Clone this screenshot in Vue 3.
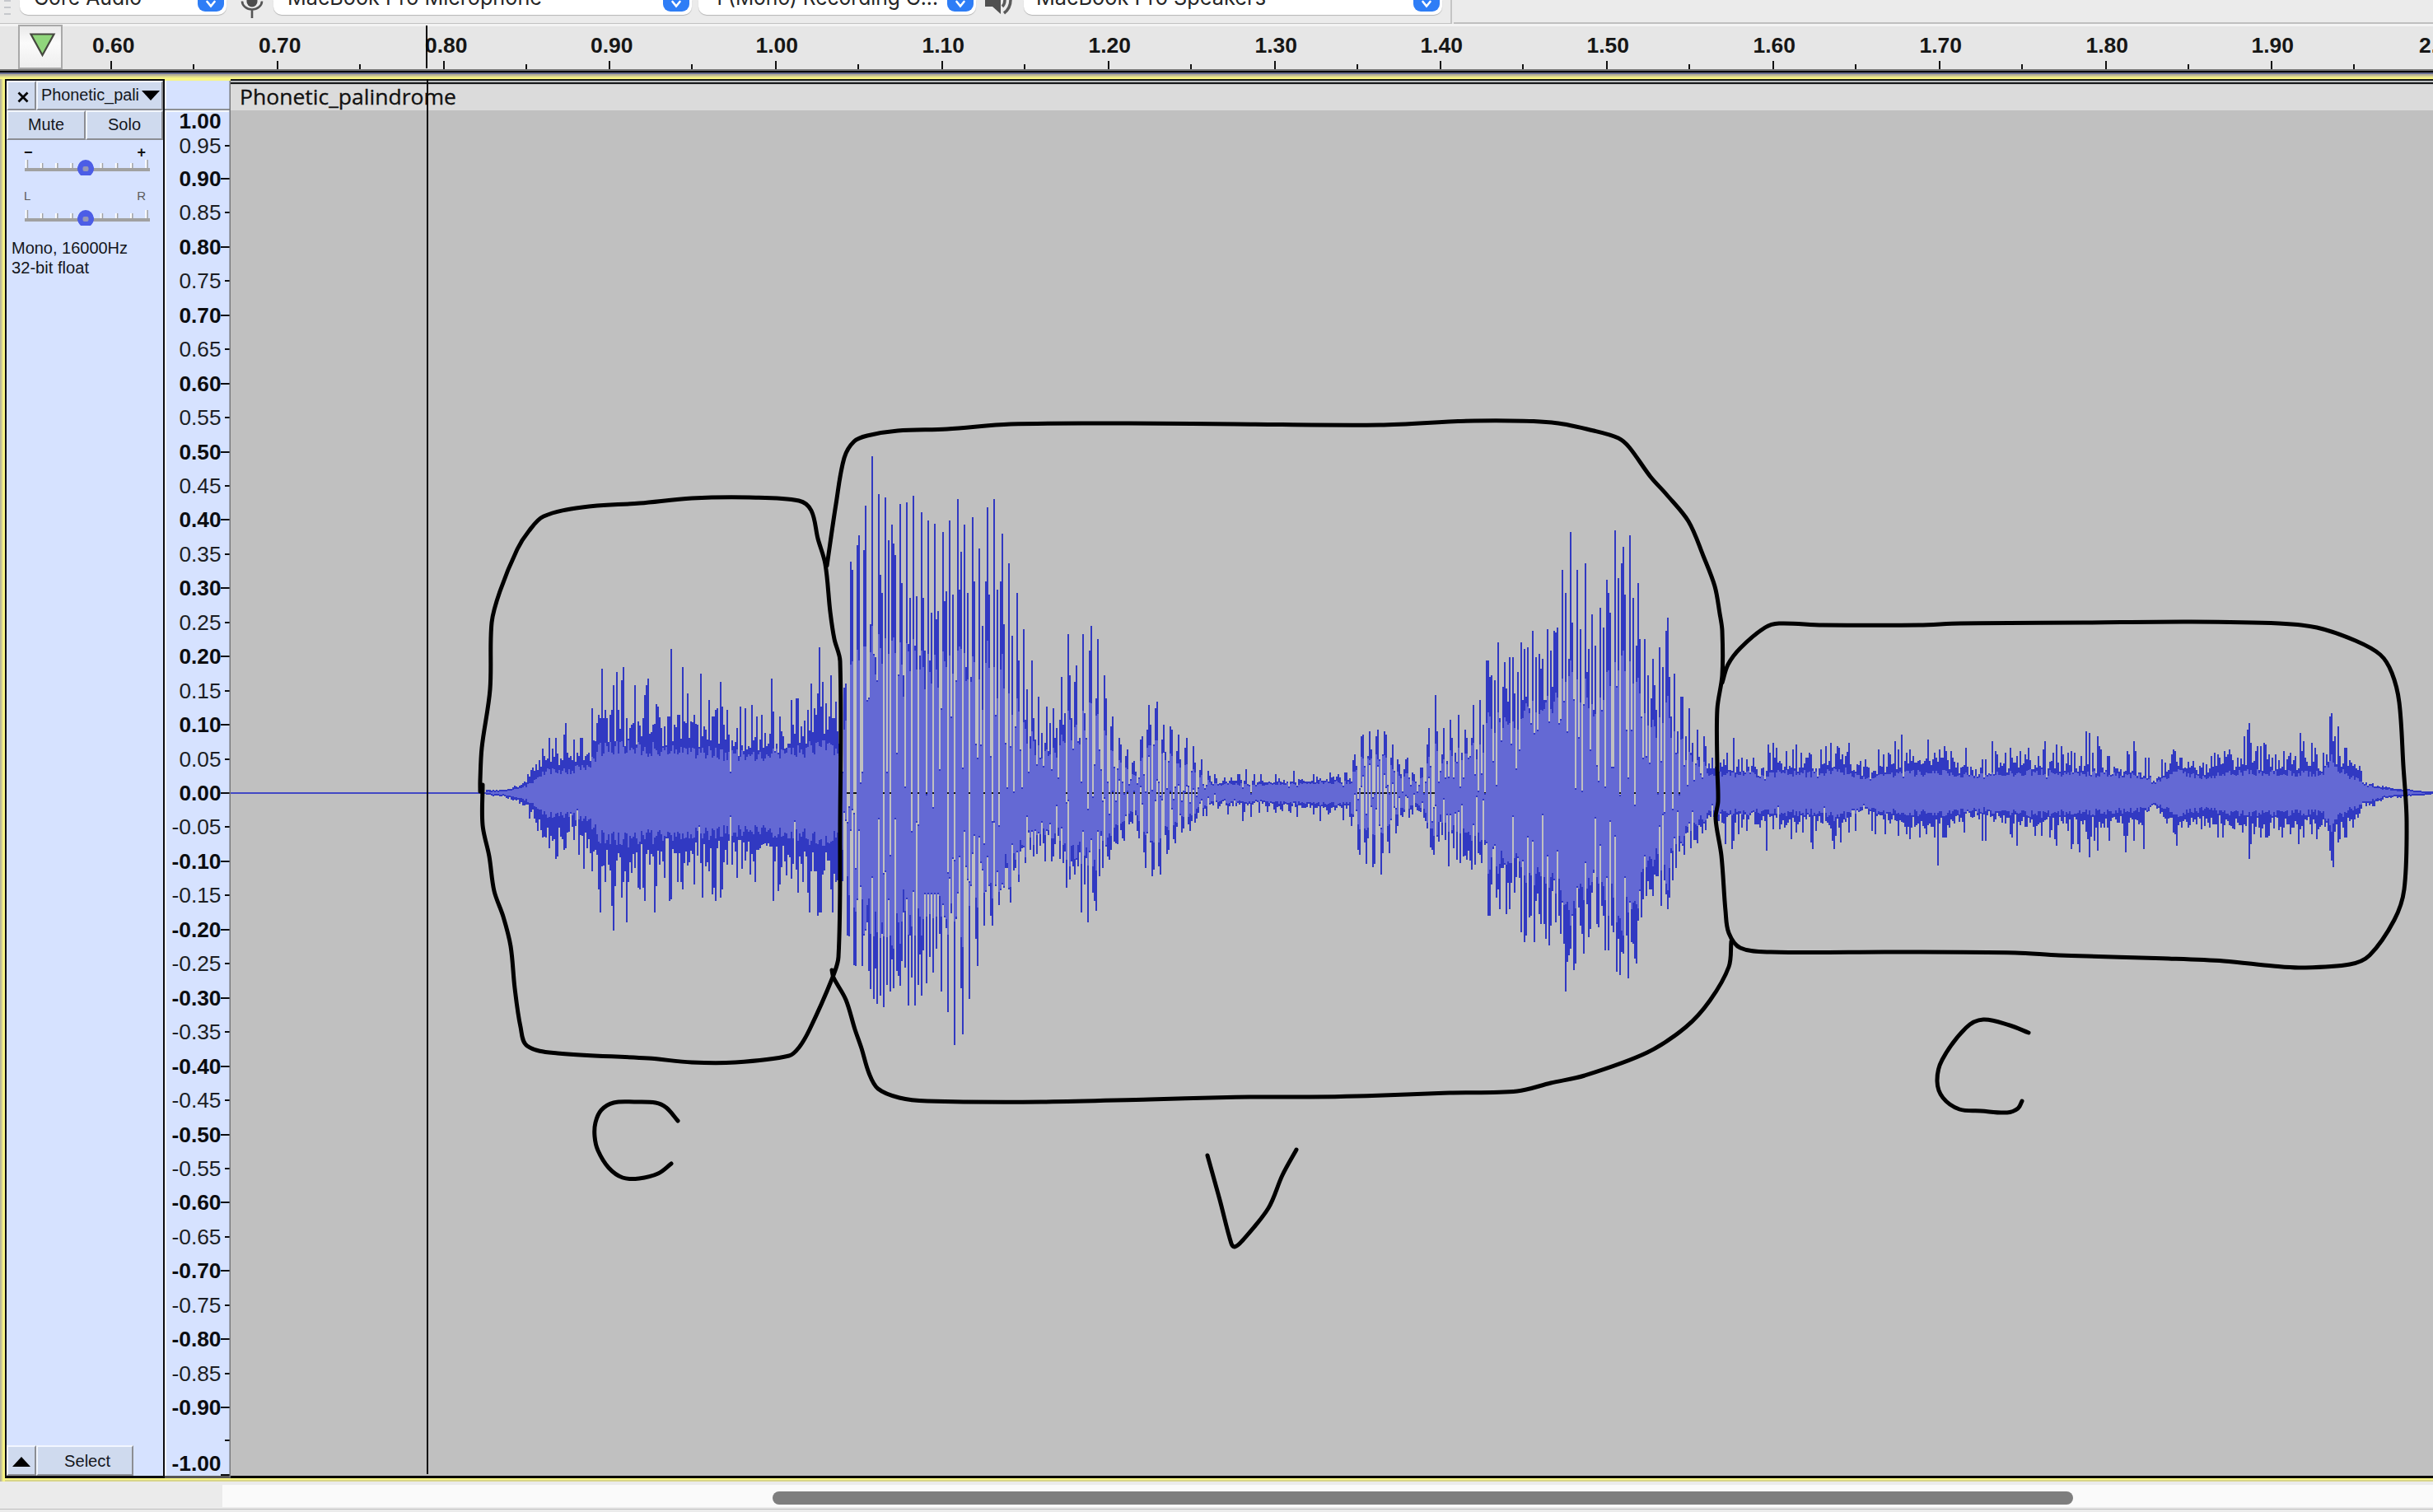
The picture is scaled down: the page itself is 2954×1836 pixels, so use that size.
<script setup>
const MID = 963
const UNIT = 829

/* ---------- rulers ---------- */
const timeMarks = Array.from({ length: 15 }, (_, i) => ({
  x: Math.round(135 + i * 201.8),
  label: (0.6 + i * 0.1).toFixed(2),
}))
const timeMinor = Array.from({ length: 14 }, (_, i) => Math.round(235 + i * 201.8))

const ampMarks = []
for (let i = 20; i >= -20; i--) {
  const v = i / 20
  let y = Math.round(MID - v * UNIT)
  if (i === 19) y = 177
  if (i === -19) y = 1749
  if (i === -20) y = 1791
  const major = i % 2 === 0
  let ty = y
  if (i === 20) ty = 147
  if (i === -20) ty = 1777
  ampMarks.push({ y, ty, major, tick: i !== 20, label: i === -19 ? '' : v.toFixed(2) })
}

/* ---------- waveform ---------- */
const parse = (s) => s.trim().split(/\s+/).map((p) => p.split(',').map(Number))

const vowelA = parse(`858,1117 658,955 647,975 977,1247 940,1249 357,998 376,950 955,1317 1087,1320 318,1162 294,998 882,1132 858,1320 329,1247 223,1235
686,1215 680,1332 506,1375 106,1110 576,1398 584,1325 640,1410 196,970 388,1391 431,1243 1098,1418 204,1097 858,1364 306,1162 1055,1380 270,1303
314,1372 341,970 812,1332 625,1344 220,1367 408,1308 627,1192 892,1324 216,1160 553,1414 443,1247 998,1348 200,1143 557,1414 439,978 982,1364
580,1293 239,1391 443,1282 568,1150 910,1360 259,1150 592,1298 478,1150 942,1336 267,1150 494,1278 474,1150 852,1243 707,1380 286,1175 451,1203
427,1230 1097,1430 259,1112 725,1195 435,1065 1067,1508 640,1207 208,1148 423,1060 333,1372 848,1482 270,1000 608,1085 431,1115 1117,1398
631,1130 251,1053 404,1010 790,1254 824,1320 325,1013 792,1074 510,1093 1028,1223 404,1143 227,1060 435,1130 820,1200 974,1223 208,978
721,1130 423,1097 985,1175 404,1140 290,1125 506,1133 788,1086 894,1086 361,1137 797,1168 533,1032 904,1093 749,1086 431,1050 592,1120
804,1047 894,1040 517,1038 733,1074 662,965 858,1003 772,1043 592,1000 729,1058 780,998 840,1054 678,1005 824,1034 764,978 843,1027 788,1070
702,998 808,1007 741,982 852,1070 706,1058 776,1030 753,940 870,1010 733,1065 631,992 745,1074 717,1047 930,1133 529,928 627,1113 729,1070
802,1082 643,1102 604,1067 784,1082 776,1050 880,1192 529,1000 717,1125 776,1062 945,1215 568,1050 510,1020 916,1145 840,1164 682,1188
541,1000 804,1105 852,1010 925,1086 627,922 682,1035 880,1058 957,1066 749,1043 725,906 845,1023 925,1027 849,1030 776,878 792,996 880,1015
908,1022 819,963 804,906 886,982 875,976 835,980 831,906 857,960 885,998 870,1015 780,894 772,935 862,1050 904,1086 757,1005 698,822
745,1025 900,1105 792,1090 706,927 690,878 880,1082 913,1102 780,925 745,812 810,1007 896,1053 831,1043 749,906 757,948 922,1018 892,1027
808,988 768,890 827,960 925,1003 902,992 800,908 776,892 890,982 930,998 855,975 796,900 835,979 914,968 894,955 853,933 827,925 886,963
896,945 888,963 855,920 866,935 880,933 886,937 862,912 872,930 887,945 885,939 884,933 878,928 870,925 880,937 884,958 878,940 870,931
878,940 878,925`)

const vowelB = parse(`597,760 520,725 498,645 540,706 660,845 620,863 432,618 426,580 540,820 715,898 504,803 414,538 480,690 655,910 640,898 432,700
408,543 516,760 765,935 498,857 414,572 426,622 608,815 640,857 510,737 462,605 558,692 692,785 516,760 534,656 570,720 632,725 552,708
516,650 510,656 582,730 608,700 564,718 570,645 597,690 632,702 608,706 546,708 546,675 640,730 597,740 462,768 402,585 540,838 740,845
690,863 282,688 414,797 597,815 558,745`)

const vowelC = parse(`762,998 685,895 830,1012 782,940 827,1090 661,940 714,992 830,1036 757,935 784,1070 646,930 855,1080 757,911 830,1060 690,1058
714,1070 772,1043 767,1074 714,1100 618,970 820,1085 748,887 868,1052 603,1055 816,1080 675,897 875,1027 487,1022 487,1235 535,1235 530,1143
782,1040 545,1030 850,1182 434,1158 656,1215 720,1095 564,1095 492,1085 569,1230 608,1138 478,1215 730,1138 478,945 584,1168 802,1120
521,1065 748,1124 434,1283 603,1076 454,1311 593,1293 449,1006 627,1240 670,1235 400,1018 700,1311 478,1192 690,1170 468,1230 510,1259
482,940 603,1259 603,1303 396,1060 665,1322 458,1264 564,1163 400,1130 405,1254 391,1047 670,1235 658,1288 222,1195 605,1316 289,1457
695,1370 482,1350 111,1330 376,1235 600,1394 860,1375 222,1153 710,1211 396,1264 868,1288 615,1346 203,1080 521,1200 454,1298 748,1273
352,1167 632,1110 444,950 793,1259 840,1269 333,1030 632,1206 391,1235 855,1336 251,1123 290,1336 347,960 797,1264 797,1283 106,1003
562,1399 246,1303 880,1409 203,1341 154,1346 294,1123 690,1293 830,1418 121,1195 690,1312 304,1316 908,1360 444,1375 261,1248 425,1163
651,1240 772,1187 425,1060 767,1177 531,1134 786,1158 598,1158 482,1177 560,1114 632,1119 875,1119 449,975 782,1206 507,940 930,1130
400,1172 362,1216 535,1182 651,1052 920,1130 526,1008 758,1095 695,930 878,1047 593,1022 593,1030 792,1056 709,993 850,990 627,965
758,1036 729,930 836,1013 787,1013 690,1022 768,970 816,975 830,993 709,965 738,984 802,950 787,940 802,945 772,912 802,945 797,960`)

// Small repeatable generator, so the noisy parts are stable between renders
let seed = 20231
const rnd = () => {
  seed = (seed * 1103515245 + 12345) & 0x7fffffff
  return seed / 0x7fffffff
}

const cols = [] // { x, t, b, r } relative to the centre line, up is positive

function voiced(x0, data, mid, k) {
  const m = data.map(([t, b]) => Math.max(Math.abs(mid - t), Math.abs(b - mid)) / k)
  data.forEach(([t, b], i) => {
    const avg = (m[i] * 2 + (m[i - 1] ?? m[i]) + (m[i + 1] ?? m[i])) / 4
    cols.push({ x: x0 + i * 2, t: (mid - t) / k, b: (mid - b) / k, r: avg * 0.62 })
  })
}

function lerp(keys, x) {
  let i = 1
  while (i < keys.length - 1 && keys[i][0] < x) i++
  const a = keys[i - 1]
  const c = keys[i]
  const f = Math.min(1, Math.max(0, (x - a[0]) / (c[0] - a[0])))
  return a.map((v, n) => v + (c[n] - v) * f)
}

function noise(x0, from, to, mid, k, keys, ups, downs) {
  const up = new Map(parse(ups))
  const down = new Map(parse(downs))
  for (let cx = from; cx <= to; cx += 6) {
    const [, kt, kb, kr] = lerp(keys, cx)
    let t = ((mid - kt) / k) * (0.78 + rnd() * 0.46)
    let b = ((mid - kb) / k) * (0.78 + rnd() * 0.46)
    if (up.has(cx)) t = (mid - up.get(cx)) / k
    if (down.has(cx)) b = (mid - down.get(cx)) / k
    cols.push({ x: x0 + (cx - 3) / 3, t, b, r: (kr / k) * (0.82 + rnd() * 0.38) })
  }
}

noise(560, 93, 1371, 813, 2.24,
  [[90, 806, 818, 3], [160, 803, 822, 6], [220, 791, 838, 14], [250, 765, 855, 24], [280, 740, 895, 45], [320, 710, 920, 58], [400, 720, 912, 62], [470, 705, 950, 80], [500, 640, 990, 115], [600, 655, 990, 125], [700, 630, 990, 120], [750, 665, 960, 115], [850, 650, 980, 110], [1000, 690, 970, 100], [1200, 670, 980, 105], [1300, 620, 1000, 125], [1370, 650, 1010, 110]],
  `297,693 321,663 345,663 375,655 381,623 411,668 435,663 441,663 477,582 495,623 501,600 513,475 525,587 543,600 549,587 555,520 567,484 573,587 585,506 591,470 603,610 621,627 627,623 633,520 645,618 669,547 675,520 681,502 711,570 717,578 729,636 741,632 753,605 759,605 765,421 789,600 795,600 807,470 825,542 837,618 849,600 873,488 891,640 903,560 915,605 921,605 927,587 933,583 945,511 951,578 957,627 969,587 981,755 1005,636 1017,578 1035,582 1059,573 1077,605 1095,600 1131,502 1137,591 1161,605 1203,560 1209,627 1221,556 1227,556 1263,587 1275,515 1287,582 1299,542 1305,417 1311,578 1317,511 1329,569 1347,493 1353,609 1359,609 1365,564`,
  `249,882 279,917 297,935 309,935 321,962 345,993 351,985 375,967 381,962 399,870 423,860 429,980 447,1020 477,1025 501,1074 507,1138 525,1056 549,1120 555,1187 561,1065 585,1097 591,1056 603,1164 609,1056 621,1030 645,1070 651,1074 663,1070 669,1106 705,1138 711,1065 741,1043 759,1106 765,1102 789,1056 801,1056 807,1074 849,1061 867,905 879,1097 903,1025 915,1088 921,1070 927,1106 945,1097 951,1074 969,1007 981,878 987,1007 1005,1043 1023,1020 1053,1034 1071,1056 1137,1106 1155,1079 1161,1061 1185,1038 1203,1047 1215,892 1227,1083 1245,1056 1263,1083 1269,1138 1299,1146 1305,1138 1311,1138 1347,1074 1353,1138 1365,1056`)
cols.push({ x: 1018, t: 60, b: -60, r: 45 }, { x: 1020, t: 40, b: -60, r: 40 })

voiced(1022, vowelA, 908, 1.96)

noise(1450, 153, 570, 639, 3,
  [[150, 598, 678, 34], [230, 605, 675, 30], [300, 595, 690, 34], [350, 598, 682, 34], [450, 588, 690, 38], [570, 590, 690, 38]],
  `159,570 165,570 177,618 189,552 207,640 219,570 243,570 297,570 345,615 363,558 375,612 435,570 495,564 525,570 549,564 555,564 543,612`,
  `177,742 183,708 207,725 237,712 267,708 297,712 321,706 345,706 351,712 375,725 435,718 459,742 489,718 495,712 543,737 567,725`)

voiced(1640, vowelB, 639, 3)
voiced(1750, vowelC, 875, 2.4123)

noise(2080, 15, 1257, 730, 3,
  [[0, 640, 815, 66], [50, 635, 830, 70], [180, 655, 812, 66], [250, 628, 835, 72], [380, 645, 815, 68], [450, 610, 850, 88], [540, 650, 785, 60], [700, 632, 840, 72], [850, 622, 835, 72], [950, 655, 805, 60], [1100, 632, 830, 70], [1257, 625, 845, 78]],
  `39,606 51,582 75,528 93,606 105,600 123,606 147,600 189,680 201,552 207,582 219,546 225,600 231,564 243,612 267,576 291,570 303,552 321,582 339,600 345,600 351,582 357,590 381,670 393,570 411,558 429,546 453,558 459,564 471,588 483,594 489,580 495,546 537,612 555,606 573,680 603,570 621,588 639,582 645,588 663,540 675,570 687,516 693,670 705,582 717,570 729,594 783,534 789,612 807,582 813,600 825,570 843,558 849,576 867,576 873,600 921,564 981,606 987,672 993,606 1017,540 1029,576 1035,590 1065,582 1083,564 1089,600 1107,594 1119,576 1137,588 1149,564 1185,594 1203,570 1209,540 1215,672 1233,612 1239,582 1251,552`,
  `45,917 69,935 75,905 93,881 105,857 123,869 153,845 159,845 165,845 171,857 195,941 219,863 237,780 243,863 285,899 303,875 327,875 357,911 363,935 375,869 405,785 435,905 441,935 447,887 465,911 495,875 519,869 549,775 579,869 591,881 627,881 675,887 705,881 717,899 753,893 777,881 807,893 819,995 837,893 843,893 849,893 915,875 981,905 993,905 1083,881 1089,893 1107,923 1173,887 1197,887 1227,893 1245,899 1251,923`)

noise(2500, 3, 1362, 730, 3,
  [[0, 635, 835, 72], [300, 660, 830, 62], [348, 685, 765, 42], [375, 665, 815, 50], [420, 630, 840, 75], [530, 648, 828, 58], [570, 620, 830, 62], [680, 625, 840, 75], [960, 635, 840, 68], [975, 610, 850, 90], [993, 560, 880, 140], [1010, 615, 860, 100], [1050, 625, 845, 60], [1095, 660, 800, 45], [1110, 693, 768, 36], [1140, 700, 775, 24], [1180, 708, 750, 15], [1240, 718, 745, 6], [1270, 716, 741, 12], [1320, 722, 738, 4], [1362, 726, 734, 0]],
  `9,558 15,588 33,582 45,576 57,582 81,595 99,504 111,510 123,582 141,522 147,558 153,570 177,594 183,594 195,660 249,576 255,588 273,540 279,576 315,600 327,600 375,606 387,618 411,588 417,570 423,576 441,600 447,600 489,612 525,618 555,594 567,582 579,588 585,600 603,576 615,588 621,570 627,588 651,600 675,522 687,498 693,474 699,546 717,576 723,558 735,558 747,546 753,552 765,588 777,600 789,588 819,576 837,594 843,582 861,594 879,510 885,576 891,540 897,600 921,546 933,564 939,588 963,582 975,588 987,450 993,438 999,540 1005,522 1017,486 1041,564 1047,564 1065,618 1077,624 1095,630 1101,648`,
  `33,869 45,935 51,917 69,917 75,947 99,870 105,899 111,965 117,890 129,905 141,941 183,905 237,887 243,947 249,887 273,905 309,935 417,875 423,881 429,923 471,857 519,863 549,857 579,893 597,893 639,863 669,875 693,971 699,917 711,881 735,893 753,893 759,893 765,887 813,893 843,881 873,917 891,893 921,881 939,899 987,941 993,977 999,1001 1017,911 1023,899 1041,893 1047,893 1071,857`)

let peakPath = ''
let rmsPath = ''
for (const c of cols) {
  const top = Math.round(MID - c.t)
  const bot = Math.max(top + 2, Math.round(MID - c.b))
  peakPath += `M${c.x} ${top}h2V${bot}h-2z`
  const rt = Math.max(Math.round(MID - c.r), top + 2)
  const rb = Math.min(Math.round(MID + c.r), bot - 2)
  if (rb > rt) rmsPath += `M${c.x} ${rt}h2V${rb}h-2z`
}

/* ---------- hand-drawn annotations ---------- */
const strokes = [
  '583,961 583,948 585,908 595,837 597,756 607,718 628,667 642,645 660,627 707,616 777,611 840,605 910,604 970,608 985,620 993,654 1002,685 1008,743 1013,776 1020,803 1020,1002 1018,1162 1010,1189 983,1250 970,1272 958,1282 893,1290 840,1290 787,1285 677,1279 640,1270 632,1247 625,1200 620,1149 611,1113 600,1082 594,1040 586,1002 586,953',
  '1004,687 1015,612 1025,556 1037,536 1053,529 1090,523 1150,521 1227,515 1350,514 1500,515 1675,516 1790,511 1884,513 1935,523 1965,532 1978,543 2004,579 2023,600 2050,633 2068,675 2082,712 2088,745 2091,766 2091,820 2085,861 2085,932 2086,973 2083,994 2090,1039 2095,1106 2099,1133 2113,1151 2150,1156 2300,1156 2447,1157 2500,1160 2633,1164 2700,1167 2760,1173 2793,1175 2853,1171 2877,1160 2907,1117 2919,1080 2922,997 2918,930 2913,853 2904,817 2890,795 2860,778 2813,762 2767,757 2660,755 2530,756 2380,757 2330,759 2213,759 2160,757 2143,762 2113,787 2098,807 2091,829',
  '2102,1143 2099,1174 2076,1215 2047,1247 2000,1278 1924,1306 1883,1315 1842,1325 1760,1327 1648,1331 1590,1332 1517,1332 1396,1335 1264,1338 1126,1337 1092,1333 1066,1322 1055,1303 1046,1273 1038,1250 1027,1214 1012,1187 1010,1178',
  '823,1361 809,1345 796,1339 770,1338 745,1339 730,1348 723,1363 722,1380 726,1397 739,1418 756,1430 776,1431 799,1425 815,1413',
  '1466,1403 1481,1457 1495,1510 1499,1514 1508,1507 1540,1467 1557,1427 1574,1396',
  '2463,1254 2440,1245 2408,1238 2387,1248 2358,1287 2352,1313 2359,1333 2379,1347 2405,1349 2437,1351 2450,1346 2455,1337',
].map((s) => {
  const p = parse(s)
  let d = `M${p[0]}`
  for (let i = 0; i < p.length - 1; i++) {
    const a = p[i - 1] ?? p[i]
    const b = p[i]
    const c = p[i + 1]
    const e = p[i + 2] ?? c
    // Tension follows the shorter neighbour so long runs do not overshoot corners
    const seg = Math.hypot(c[0] - b[0], c[1] - b[1])
    const k1 = seg / (3 * (Math.hypot(c[0] - a[0], c[1] - a[1]) || 1))
    const k2 = seg / (3 * (Math.hypot(e[0] - b[0], e[1] - b[1]) || 1))
    d += `C${b[0] + (c[0] - a[0]) * k1} ${b[1] + (c[1] - a[1]) * k1} ${c[0] - (e[0] - b[0]) * k2} ${c[1] - (e[1] - b[1]) * k2} ${c[0]} ${c[1]}`
  }
  return d
})

const sliders = [
  { id: 'gain', left: '−', right: '+' },
  { id: 'pan', left: 'L', right: 'R' },
]
</script>

<template>
  <div class="window">
    <header class="devices">
      <div class="bar">
        <div class="grip"><i></i><i></i><i></i></div>
        <div class="select host">
          <svg class="label" width="140" height="18"><text x="0" y="6" textLength="131" lengthAdjust="spacingAndGlyphs">Core Audio</text></svg>
          <span class="badge"><svg width="14" height="12" viewBox="0 0 14 12"><path d="M2.500 3 7 8.500 11.500 3" /></svg></span>
        </div>
        <svg class="mic" width="28" height="22" viewBox="0 0 28 22">
          <path d="M7.500 0h13v2a6.500 6.500 0 0 1-13 0z" fill="#4c4c4c" />
          <path d="M2 1.500a12 10 0 0 0 24 0M14 12v10" fill="none" stroke="#555" stroke-width="2.600" />
        </svg>
        <div class="select input">
          <svg class="label" width="320" height="18"><text x="0" y="6" textLength="309" lengthAdjust="spacingAndGlyphs">MacBook Pro Microphone</text></svg>
          <span class="badge"><svg width="14" height="12" viewBox="0 0 14 12"><path d="M2.500 3 7 8.500 11.500 3" /></svg></span>
        </div>
        <div class="select channels">
          <svg class="label" width="280" height="18"><text x="-2" y="6" textLength="272" lengthAdjust="spacingAndGlyphs">1 (Mono) Recording C...</text></svg>
          <span class="badge"><svg width="14" height="12" viewBox="0 0 14 12"><path d="M2.500 3 7 8.500 11.500 3" /></svg></span>
        </div>
        <svg class="speaker" width="38" height="20" viewBox="0 0 38 20">
          <path d="M0 0h19v17L9 8H0z" fill="#505050" />
          <path d="M24 0q0 5-3 8M31 0q0 10-8 16" fill="none" stroke="#5a5a5a" stroke-width="3.500" />
        </svg>
        <div class="select output">
          <svg class="label" width="290" height="18"><text x="-2" y="6" textLength="279" lengthAdjust="spacingAndGlyphs">MacBook Pro Speakers</text></svg>
          <span class="badge"><svg width="14" height="12" viewBox="0 0 14 12"><path d="M2.500 3 7 8.500 11.500 3" /></svg></span>
        </div>
      </div>
      <div class="rest"></div>
    </header>

    <div class="timeline">
      <button class="pin">
        <svg width="34" height="32" viewBox="0 0 34 32"><path d="M3.500 3.500h28L17.500 29z" fill="#90d67c" stroke="#45483f" stroke-width="2.200" /></svg>
      </button>
      <svg class="time-scale" width="2878" height="55" viewBox="76 29 2878 55">
        <g fill="#111" shape-rendering="crispEdges">
          <rect v-for="m in timeMarks" :key="'M' + m.x" :x="m.x - 1" y="74" width="2" height="10" />
          <rect v-for="x in timeMinor" :key="'m' + x" :x="x - 1" y="78" width="2" height="6" />
        </g>
        <text v-for="m in timeMarks" :key="m.label" :x="m.x - (m.label[0] === '1' ? 24.5 : 23)" y="64" textLength="51.500" lengthAdjust="spacingAndGlyphs">{{ m.label }}</text>
        <rect x="517" y="31" width="2" height="52" fill="#000" />
      </svg>
    </div>

    <div class="track-edge"></div>

    <main class="track">
      <div class="focus-edge"></div>
      <aside class="panel">
        <div class="row">
          <div class="cell close"><svg width="14" height="14" viewBox="0 0 14 14"><path d="M1.500 1.500l11 11M12.500 1.500l-11 11" stroke="#000" stroke-width="2.800" /></svg></div>
          <div class="cell name">
            <svg width="122" height="32"><text x="1" y="22" textLength="119" lengthAdjust="spacingAndGlyphs">Phonetic_pali</text></svg>
            <svg width="24" height="14" viewBox="0 0 24 14"><path d="M1 1h22L12 13z" /></svg>
          </div>
        </div>
        <div class="row">
          <div class="cell mute"><svg width="46" height="32"><text x="1" y="22" textLength="44" lengthAdjust="spacingAndGlyphs">Mute</text></svg></div>
          <div class="cell solo"><svg width="42" height="32"><text x="1" y="22" textLength="40" lengthAdjust="spacingAndGlyphs">Solo</text></svg></div>
        </div>
        <div v-for="s in sliders" :key="s.id" class="slider" :class="s.id">
          <div class="ends"><span>{{ s.left }}</span><span>{{ s.right }}</span></div>
          <svg width="154" height="26" viewBox="29 187 154 26">
            <g v-for="n in 9" :key="n">
              <rect :x="12.500 + n * 18.200" :y="n === 1 || n === 9 ? 194 : 198" width="2" :height="n === 1 || n === 9 ? 12 : 8" fill="#fff" />
              <rect :x="14.500 + n * 18.200" :y="n === 1 || n === 9 ? 194 : 198" width="1.500" :height="n === 1 || n === 9 ? 12 : 8" fill="#a3a3a3" />
            </g>
            <rect x="30" y="204" width="152" height="4" fill="#a1a1a1" />
            <ellipse cx="104" cy="205" rx="9.800" ry="8" fill="#4c5de6" />
            <ellipse cx="104" cy="204.500" rx="9.800" ry="8.500" fill="#4c5de6" />
            <ellipse cx="104" cy="204.500" rx="9.800" ry="10.500" fill="#4c5de6" />
            <rect x="100.500" y="202" width="7" height="6" rx="2" fill="#9698b8" />
          </svg>
        </div>
        <div class="format">
          <svg width="150" height="50"><text x="1" y="18" textLength="141" lengthAdjust="spacingAndGlyphs">Mono, 16000Hz</text><text x="1" y="42" textLength="94" lengthAdjust="spacingAndGlyphs">32-bit float</text></svg>
        </div>
        <div class="foot">
          <div class="cell fold"><svg width="22" height="14" viewBox="0 0 22 14"><path d="M0 13h22L11 1z" /></svg></div>
          <div class="cell pick"><svg width="58" height="32"><text x="1" y="23" textLength="56" lengthAdjust="spacingAndGlyphs">Select</text></svg></div>
        </div>
      </aside>

      <svg class="amp-scale" width="80" height="1697" viewBox="200 98 80 1697">
        <rect x="200" y="98" width="80" height="1697" fill="#d6e2ff" />
        <rect x="200" y="98" width="2" height="1695" fill="#f4f8ff" />
        <rect x="200" y="132" width="80" height="2" fill="#8e9094" />
        <rect x="202" y="134" width="76" height="2" fill="#f4f8ff" />
        <rect x="200" y="1792" width="80" height="3" fill="#555" />
        <g v-for="a in ampMarks" :key="a.y">
          <rect v-if="a.tick" :x="a.major ? 268 : 273" :y="a.y - 1" :width="a.major ? 11 : 6" height="2" fill="#0c0d10" />
          <text v-if="a.label" :x="268.500" :y="a.ty + 9" :class="{ major: a.major }" text-anchor="end" :textLength="a.label[0] === '-' ? 60 : 51" lengthAdjust="spacingAndGlyphs">{{ a.label }}</text>
        </g>
        <rect x="278.500" y="98" width="1.500" height="1696" fill="#77787a" />
      </svg>

      <section class="clip">
        <div class="title">
          <svg width="280" height="32"><text x="-1" y="25" textLength="263" lengthAdjust="spacingAndGlyphs">Phonetic_palindrome</text></svg>
        </div>
        <svg class="wave" width="2674" height="1658" viewBox="280 134 2674 1658">
          <g shape-rendering="crispEdges">
            <rect x="280" y="962" width="312" height="2" fill="#4248c4" />
            <rect x="1022" y="962" width="1900" height="2" fill="#111" />
            <path :d="peakPath" fill="#3139c2" />
            <path :d="rmsPath" fill="#6469d4" />
          </g>
          <path v-for="(d, i) in strokes" :key="i" class="ink" :d="d" />
        </svg>
        <div class="cursor"></div>
      </section>
    </main>

    <footer class="scroll">
      <div class="rail"><div class="thumb"></div></div>
    </footer>
  </div>
</template>

<style>
html, body { margin: 0; background: #ebebeb; overflow: hidden; }
</style>

<style scoped>
* { box-sizing: border-box; }
.window {
  width: 2954px; height: 1836px; overflow: hidden; display: flex; flex-direction: column;
  background: #ebebeb; font-family: "Liberation Sans", Arial, sans-serif; color: #111;
}
svg { display: block; flex: none; }

.devices { height: 29px; display: flex; background: #ebebeb; flex: none; }
.bar { width: 1763px; display: flex; align-items: flex-start; border-bottom: 1px solid #c2c2c2; border-right: 2px solid #c4c4c4; }
.rest { flex: 1; margin-left: 2px; border-bottom: 2px solid #bfbfbf; }
.grip { width: 8px; margin-left: 5px; display: flex; flex-direction: column; gap: 6px; }
.grip i { height: 2px; background: #c6c8cc; }
.select {
  height: 18px; background: #fff; border-radius: 0 0 10px 10px; display: flex; align-items: flex-start;
  justify-content: space-between; padding: 0 3px 0 17px; box-shadow: 0 1px 1px #b5b5b5;
}
.label { overflow: visible; }
.label text { font: 26px Inter, "Liberation Sans", sans-serif; fill: #262626; }
.badge { width: 32px; height: 14px; border-radius: 0 0 9px 9px; background: #2e7df6; display: flex; justify-content: center; }
.badge path { fill: none; stroke: #fff; stroke-width: 2.6; stroke-linecap: round; }
.badge svg { margin-top: -1px; }
.host { width: 251px; margin-left: 11px; }
.mic { margin-left: 17px; }
.input { width: 508px; margin-left: 12px; }
.channels { width: 337px; margin-left: 8px; padding-left: 21px; }
.speaker { margin-left: 11px; }
.output { width: 508px; margin-left: 9px; }

.timeline { height: 55px; flex: none; display: flex; background: linear-gradient(#f3f3f3 0 3px, #e6e6e6 3px); }
.pin { width: 54px; height: 54px; margin-left: 22px; margin-top: 1px; padding: 0 0 6px 3px; border: 2px solid #a9a9a9; background: linear-gradient(#e9e9e9, #fbfbfb 40%, #eee); display: flex; align-items: center; justify-content: center; }
.time-scale text { font: bold 25px "Liberation Sans", Arial, sans-serif; fill: #161616; }

.track-edge { height: 12px; flex: none; background: linear-gradient(#777 0 2px, #000 2px 4px, #686d92 4px 6px, #b8b294 6px 8px, #dcd78e 8px 10px, #f8f584 10px 12px); }

.track { height: 1703px; flex: none; display: flex; background: linear-gradient(#f8f584 0 1701px, #d8d588 1701px); }
.focus-edge { width: 6px; flex: none; background: linear-gradient(90deg, #b7b49c 0 1px, #d0cd92 2px, #f8f584 4px); }
.panel { width: 194px; height: 1699px; border: solid #0c0d10; border-width: 2px 2px 3px 2px; background: #d6e2ff; display: flex; flex-direction: column; flex: none; }
.panel text { font: 20px "Liberation Sans", Arial, sans-serif; fill: #14161c; }
.row, .foot { display: flex; }
.row { height: 36px; }
.cell { background: #cfdaee; border: solid; border-width: 2px; border-color: #f2f6ff #8b8d93 #8b8d93 #f2f6ff; display: flex; align-items: center; justify-content: center; }
.close { width: 36px; padding-left: 3px; padding-top: 3px; }
.name { flex: 1; justify-content: flex-start; padding-left: 3px; }
.mute { width: 96px; }
.solo { flex: 1; }
.slider { width: 154px; margin-left: 21px; }
.gain { margin-top: 6px; }
.pan { margin-top: 17px; }
.ends { display: flex; justify-content: space-between; height: 16px; line-height: 18px; padding: 0 6px 0 0; font-size: 18px; font-weight: bold; }
.pan .ends { font-size: 15px; font-weight: normal; color: #5c5c5c; line-height: 16px; }
.gain svg { margin-top: -5px; }
.pan svg { margin-top: 2px; }
.format { margin: 16px 0 0 5px; }
.foot { margin-top: auto; height: 37px; }
.fold { width: 36px; padding-top: 2px; }
.pick { width: 118px; padding-left: 6px; }

.amp-scale { margin-top: 2px; }
.amp-scale text { font: 25px "Liberation Sans", Arial, sans-serif; fill: #1c1e24; }
.amp-scale text.major { font-weight: bold; fill: #0c0d10; }

.clip { width: 2674px; height: 1699px; background: #c0c0c0; border-bottom: 3px solid #000; position: relative; flex: none; overflow: hidden; }
.title { height: 38px; background: linear-gradient(#161819 0 2px, #bcbec0 2px 4px, #161819 4px 6px, #c6c6c6 6px 7px, #dbdbdb 7px); padding: 6px 0 0 12px; }
.title text { font: 25px "Open Sans", "Noto Sans", sans-serif; fill: #111; stroke: #111; stroke-width: 0.3; }
.title svg { overflow: visible; }
.ink { fill: none; stroke: #000; stroke-width: 5; stroke-linecap: round; stroke-linejoin: round; }
.cursor { position: absolute; left: 238px; top: 0; width: 2px; height: 1694px; background: #0a0a0a; }

.scroll { flex: 1; background: linear-gradient(#ebebeb 0 33px, #bdbdbd 33px 34px, #ebebeb 34px); padding: 4px 0 0 270px; }
.rail { height: 27px; background: #fafafa; padding: 8px 0 0 668px; }
.thumb { width: 1579px; height: 16px; border-radius: 8px; background: #7e7e7e; }
</style>
